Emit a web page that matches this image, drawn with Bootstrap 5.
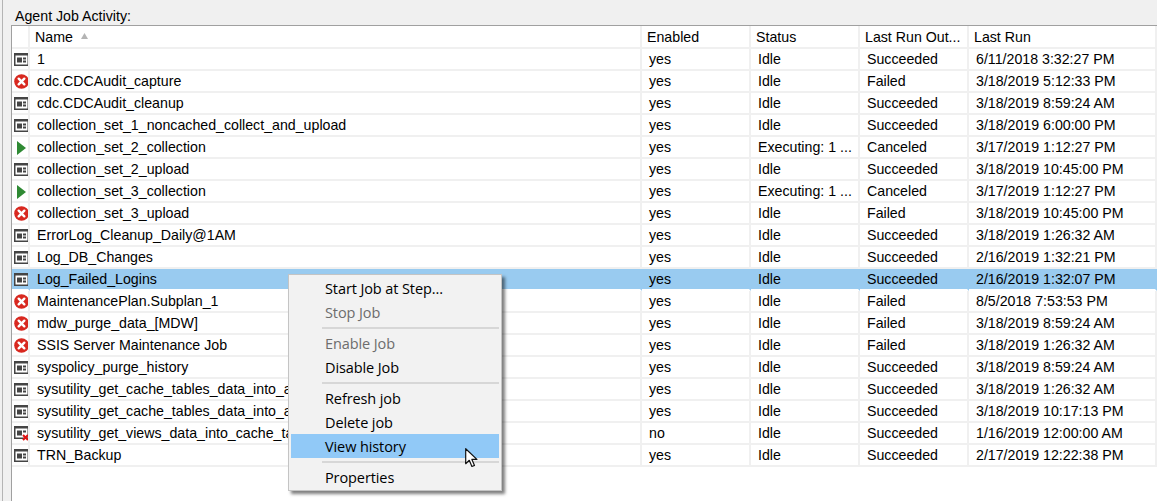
<!DOCTYPE html>
<html lang="en">
<head>
<meta charset="utf-8">
<title>Agent Job Activity</title>
<link href="https://cdn.jsdelivr.net/npm/bootstrap@5.3.0/dist/css/bootstrap.min.css" rel="stylesheet">
<style>
html,body{height:501px;overflow:hidden}
body{background:#f0f0f0;font-family:"Liberation Sans",Arial,sans-serif;font-size:14.2px;color:#000;position:relative}
.edge-line{position:absolute;left:0;top:0;bottom:0;width:3px;border-right:1px solid #b4b4b4}
.pane{padding:7px 0 0 11px;height:501px}
.pane-title{padding-left:4px;height:18px;line-height:18px;font-size:14.2px}
.job-grid{background:#fff;border:1px solid #a0a0a0;border-right:0;border-bottom:0;height:476px;overflow:hidden}
.job-table{table-layout:fixed;border-collapse:separate;border-spacing:0;width:1145px;margin:0;font-size:14.2px}
.job-table th,.job-table td{padding:0;overflow:hidden;white-space:nowrap;font-weight:400;border-right:2px solid #f0f0f0;border-bottom:2px solid #f0f0f0}
.job-table th{height:23px;padding:2px 0 0 5px;line-height:19px}
.job-table td{height:22px;padding:1px 0 0 7px;line-height:19px;vertical-align:top}
.job-table td.ico{padding:1px 0 0 2px;line-height:0;vertical-align:middle}
.job-table th.ico{padding:0}
.sort-mark{display:inline-block;margin-left:8px;width:7px;height:6px;vertical-align:3px}
.job-table tr.picked td{background:#99cbf0;border-right-color:#99cbf0;border-bottom-color:#fff}
.ctx-menu{position:absolute;left:288px;top:274px;width:214px;height:217px;background:#f2f2f2;border:1px solid #c4c4c4;box-shadow:3px 3px 3px rgba(0,0,0,.5);padding:1px 2px;font-family:"Open Sans","Noto Sans",sans-serif;font-size:14.5px}
.ctx-item{height:24px;line-height:26px;padding-left:34px;color:#000;letter-spacing:-.1px}
.ctx-item.off{color:#6d6d6d}
.ctx-item.hot{background:#91c9f7}
.ctx-sep{height:7px;padding:3px 0 2px 31px}
.ctx-sep div{height:2px;background:#d7d7d7}
.pointer{position:absolute;left:465px;top:448px;width:13px;height:20px}
</style>
</head>
<body>
<svg width="0" height="0" class="d-block">
  <symbol id="i-job" viewBox="0 0 15 13"><rect x=".75" y=".75" width="13.5" height="11.5" fill="#fff" stroke="#444" stroke-width="1.5"/><rect y="0" width="15" height="2.5" fill="#444"/><rect x="3" y="4.5" width="5" height="5" fill="#444"/><rect x="9" y="4.5" width="3" height="2" fill="#444"/><rect x="9" y="7.5" width="3" height="2" fill="#444"/></symbol>
  <symbol id="i-fail" viewBox="0 0 16 16"><circle cx="8" cy="8" r="7.8" fill="#d8281f"/><path d="M5 5l6 6M11 5l-6 6" stroke="#fff" stroke-width="2.6" stroke-linecap="round"/></symbol>
  <symbol id="i-run" viewBox="0 0 15 14"><path d="M3 0l9 7-9 7z" fill="#2f8a34"/></symbol>
  <symbol id="i-off" viewBox="0 0 15 15"><rect x=".75" y=".75" width="13.5" height="11.5" fill="#fff" stroke="#444" stroke-width="1.5"/><rect y="0" width="15" height="2.5" fill="#444"/><rect x="3" y="4.5" width="5" height="5" fill="#444"/><rect x="9" y="4.5" width="3" height="2" fill="#444"/><path d="M9 9l5 5M14 9l-5 5" stroke="#e01010" stroke-width="2"/></symbol>
</svg>
<div class="edge-line"></div>
<div class="pane">
  <div class="pane-title">Agent Job Activity:</div>
  <div class="job-grid">
    <table class="job-table">
      <colgroup><col style="width:18px"><col style="width:612px"><col style="width:109px"><col style="width:109px"><col style="width:109px"><col style="width:188px"></colgroup>
      <thead>
        <tr><th class="ico"></th><th>Name<svg class="sort-mark" viewBox="0 0 7 6"><path d="M3.5 0L7 6H0z" fill="#b4b4b4"/></svg></th><th>Enabled</th><th>Status</th><th>Last Run Out...</th><th>Last Run</th></tr>
      </thead>
      <tbody>
        <tr><td class="ico"><svg width="15" height="13"><use href="#i-job"/></svg></td><td>1</td><td>yes</td><td>Idle</td><td>Succeeded</td><td>6/11/2018 3:32:27 PM</td></tr>
        <tr><td class="ico"><svg width="15" height="15"><use href="#i-fail"/></svg></td><td>cdc.CDCAudit_capture</td><td>yes</td><td>Idle</td><td>Failed</td><td>3/18/2019 5:12:33 PM</td></tr>
        <tr><td class="ico"><svg width="15" height="13"><use href="#i-job"/></svg></td><td>cdc.CDCAudit_cleanup</td><td>yes</td><td>Idle</td><td>Succeeded</td><td>3/18/2019 8:59:24 AM</td></tr>
        <tr><td class="ico"><svg width="15" height="13"><use href="#i-job"/></svg></td><td>collection_set_1_noncached_collect_and_upload</td><td>yes</td><td>Idle</td><td>Succeeded</td><td>3/18/2019 6:00:00 PM</td></tr>
        <tr><td class="ico"><svg width="15" height="14"><use href="#i-run"/></svg></td><td>collection_set_2_collection</td><td>yes</td><td>Executing: 1 ...</td><td>Canceled</td><td>3/17/2019 1:12:27 PM</td></tr>
        <tr><td class="ico"><svg width="15" height="13"><use href="#i-job"/></svg></td><td>collection_set_2_upload</td><td>yes</td><td>Idle</td><td>Succeeded</td><td>3/18/2019 10:45:00 PM</td></tr>
        <tr><td class="ico"><svg width="15" height="14"><use href="#i-run"/></svg></td><td>collection_set_3_collection</td><td>yes</td><td>Executing: 1 ...</td><td>Canceled</td><td>3/17/2019 1:12:27 PM</td></tr>
        <tr><td class="ico"><svg width="15" height="15"><use href="#i-fail"/></svg></td><td>collection_set_3_upload</td><td>yes</td><td>Idle</td><td>Failed</td><td>3/18/2019 10:45:00 PM</td></tr>
        <tr><td class="ico"><svg width="15" height="13"><use href="#i-job"/></svg></td><td>ErrorLog_Cleanup_Daily@1AM</td><td>yes</td><td>Idle</td><td>Succeeded</td><td>3/18/2019 1:26:32 AM</td></tr>
        <tr><td class="ico"><svg width="15" height="13"><use href="#i-job"/></svg></td><td>Log_DB_Changes</td><td>yes</td><td>Idle</td><td>Succeeded</td><td>2/16/2019 1:32:21 PM</td></tr>
        <tr class="picked"><td class="ico"><svg width="15" height="13"><use href="#i-job"/></svg></td><td>Log_Failed_Logins</td><td>yes</td><td>Idle</td><td>Succeeded</td><td>2/16/2019 1:32:07 PM</td></tr>
        <tr><td class="ico"><svg width="15" height="15"><use href="#i-fail"/></svg></td><td>MaintenancePlan.Subplan_1</td><td>yes</td><td>Idle</td><td>Failed</td><td>8/5/2018 7:53:53 PM</td></tr>
        <tr><td class="ico"><svg width="15" height="15"><use href="#i-fail"/></svg></td><td>mdw_purge_data_[MDW]</td><td>yes</td><td>Idle</td><td>Failed</td><td>3/18/2019 8:59:24 AM</td></tr>
        <tr><td class="ico"><svg width="15" height="15"><use href="#i-fail"/></svg></td><td>SSIS Server Maintenance Job</td><td>yes</td><td>Idle</td><td>Failed</td><td>3/18/2019 1:26:32 AM</td></tr>
        <tr><td class="ico"><svg width="15" height="13"><use href="#i-job"/></svg></td><td>syspolicy_purge_history</td><td>yes</td><td>Idle</td><td>Succeeded</td><td>3/18/2019 8:59:24 AM</td></tr>
        <tr><td class="ico"><svg width="15" height="13"><use href="#i-job"/></svg></td><td>sysutility_get_cache_tables_data_into_a</td><td>yes</td><td>Idle</td><td>Succeeded</td><td>3/18/2019 1:26:32 AM</td></tr>
        <tr><td class="ico"><svg width="15" height="13"><use href="#i-job"/></svg></td><td>sysutility_get_cache_tables_data_into_a</td><td>yes</td><td>Idle</td><td>Succeeded</td><td>3/18/2019 10:17:13 PM</td></tr>
        <tr><td class="ico"><svg width="15" height="15"><use href="#i-off"/></svg></td><td>sysutility_get_views_data_into_cache_ta</td><td>no</td><td>Idle</td><td>Succeeded</td><td>1/16/2019 12:00:00 AM</td></tr>
        <tr><td class="ico"><svg width="15" height="13"><use href="#i-job"/></svg></td><td>TRN_Backup</td><td>yes</td><td>Idle</td><td>Succeeded</td><td>2/17/2019 12:22:38 PM</td></tr>
      </tbody>
    </table>
  </div>
</div>
<div class="ctx-menu">
  <div class="ctx-item">Start Job at Step...</div>
  <div class="ctx-item off">Stop Job</div>
  <div class="ctx-sep"><div></div></div>
  <div class="ctx-item off">Enable Job</div>
  <div class="ctx-item">Disable Job</div>
  <div class="ctx-sep"><div></div></div>
  <div class="ctx-item">Refresh job</div>
  <div class="ctx-item">Delete job</div>
  <div class="ctx-item hot">View history</div>
  <div class="ctx-sep"><div></div></div>
  <div class="ctx-item">Properties</div>
</div>
<svg class="pointer" viewBox="0 0 13 20"><path d="M.7.7v15l3.6-3.4 2.6 6.2 2.6-1.1-2.6-6h5z" fill="#fff" stroke="#111" stroke-width="1.2" stroke-linejoin="round"/></svg>
<script src="https://cdn.jsdelivr.net/npm/bootstrap@5.3.0/dist/js/bootstrap.bundle.min.js"></script>
</body>
</html>
